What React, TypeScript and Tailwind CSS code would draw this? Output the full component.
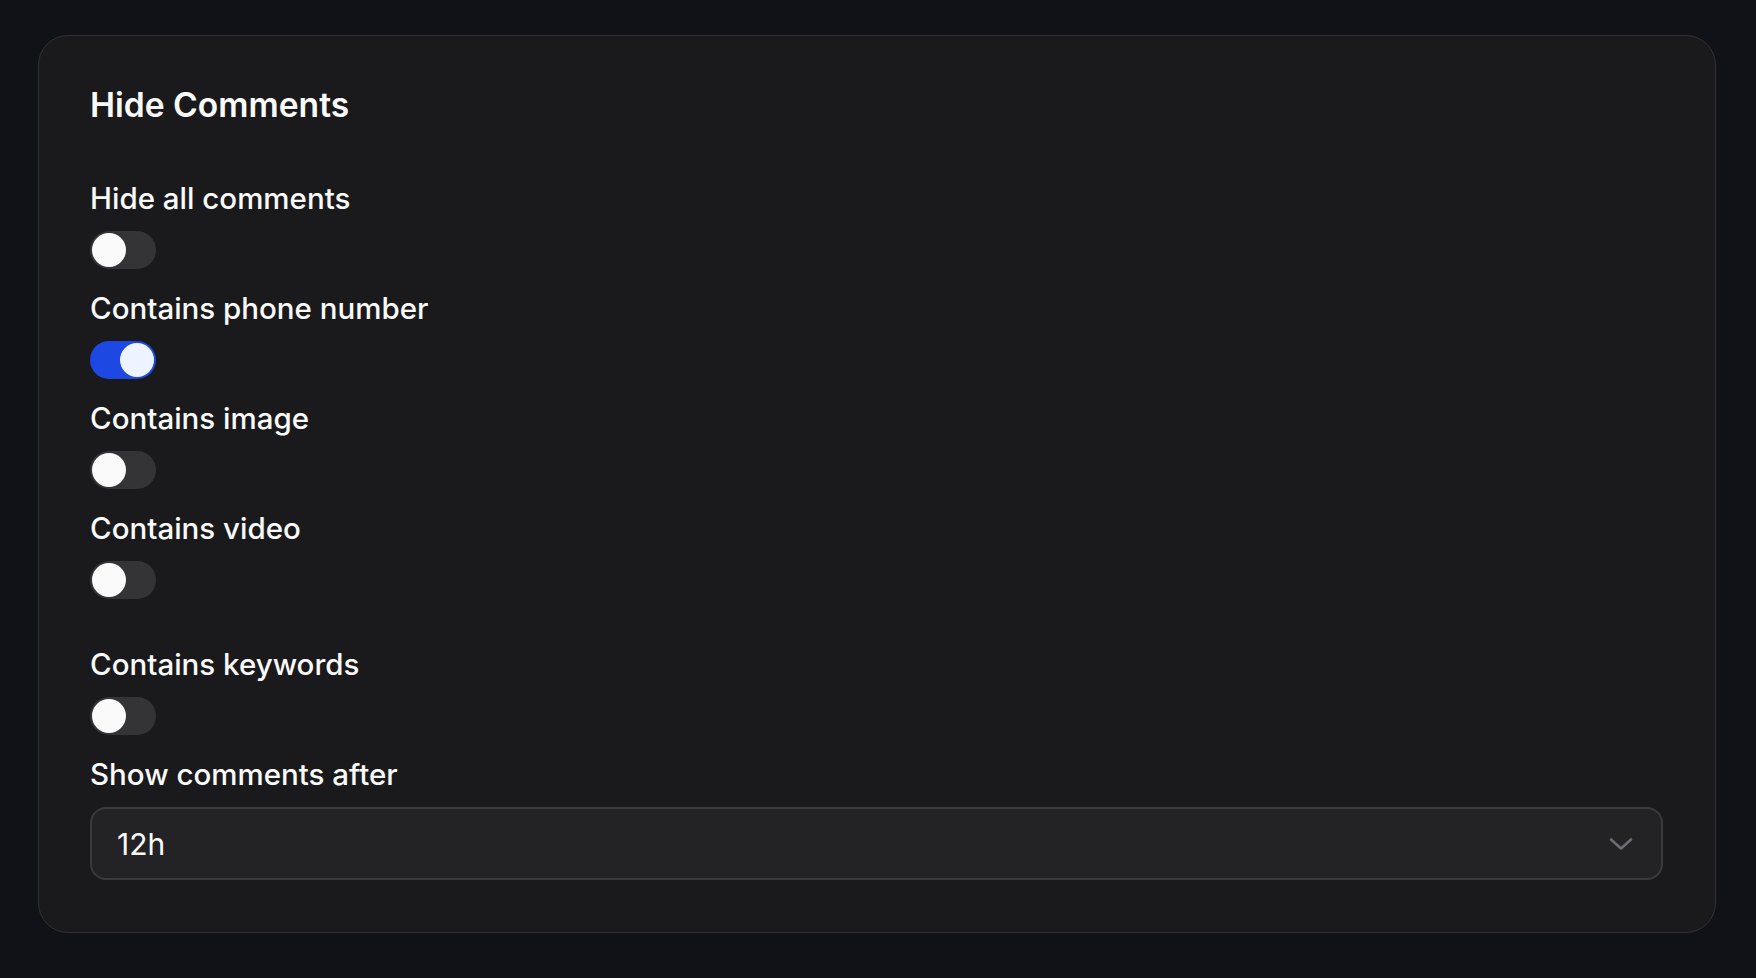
import React, { useState } from "react";

function Toggle({ on, onClick }: { on: boolean; onClick: () => void }) {
  return (
    <button
      type="button"
      onClick={onClick}
      className={`relative flex h-[38px] w-[66px] shrink-0 items-center rounded-full px-[2px] ${
        on ? "bg-[#1d48e3] justify-end" : "bg-[#343437] justify-start"
      }`}
    >
      <span
        className={`block h-[34px] w-[34px] rounded-full ${on ? "bg-[#eef4ff]" : "bg-[#fafafa]"}`}
      />
    </button>
  );
}

function Item({
  label,
  on,
  onClick,
  extraTop,
}: {
  label: string;
  on: boolean;
  onClick: () => void;
  extraTop?: boolean;
}) {
  return (
    <div className={`flex flex-col ${extraTop ? "mt-[45px]" : "mt-[19px]"} first:mt-0`}>
      <div className="h-[40px] text-[29.5px] leading-[40px] font-medium text-[#fafafa]">{label}</div>
      <div className="mt-[13px] flex">
        <Toggle on={on} onClick={onClick} />
      </div>
    </div>
  );
}

export default function App() {
  const [state, setState] = useState<Record<string, boolean>>({
    all: false,
    phone: true,
    image: false,
    video: false,
    keywords: false,
  });
  const t = (k: string) => () => setState((s) => ({ ...s, [k]: !s[k] }));

  return (
    <div
      className="min-h-[978px] w-full bg-[#111217] pt-[35px] pl-[38px] pr-[40px]"
      style={{ fontFamily: "Inter, 'Noto Sans', sans-serif" }}
    >
      <div className="rounded-[30px] border border-[#323236] bg-[#1a1a1c] pt-[49px] pb-[52px] pl-[51px] pr-[52px]">
        <h2 className="h-[40px] text-[33.6px] leading-[40px] font-semibold text-[#fafafa]">Hide Comments</h2>
        <div className="mt-[53px] flex flex-col">
          <Item label="Hide all comments" on={state.all} onClick={t("all")} />
          <Item label="Contains phone number" on={state.phone} onClick={t("phone")} />
          <Item label="Contains image" on={state.image} onClick={t("image")} />
          <Item label="Contains video" on={state.video} onClick={t("video")} />
          <Item label="Contains keywords" on={state.keywords} onClick={t("keywords")} extraTop />
          <div className="mt-[19px] flex flex-col">
            <div className="h-[40px] text-[29.5px] leading-[40px] font-medium text-[#fafafa]">
              Show comments after
            </div>
            <div className="mt-[13px] flex h-[73px] items-center justify-between rounded-[16px] border-2 border-[#3a3a3e] bg-[#232325] pl-[25px] pr-[28px]">
              <span className="text-[30px] leading-[40px] text-[#fafafa]">12h</span>
              <svg width="24" height="14" viewBox="0 0 24 14" fill="none">
                <path
                  d="M2 2.5 L12 11.5 L22 2.5"
                  stroke="#6c6c72"
                  strokeWidth="2.6"
                  strokeLinecap="round"
                  strokeLinejoin="round"
                />
              </svg>
            </div>
          </div>
        </div>
      </div>
    </div>
  );
}
